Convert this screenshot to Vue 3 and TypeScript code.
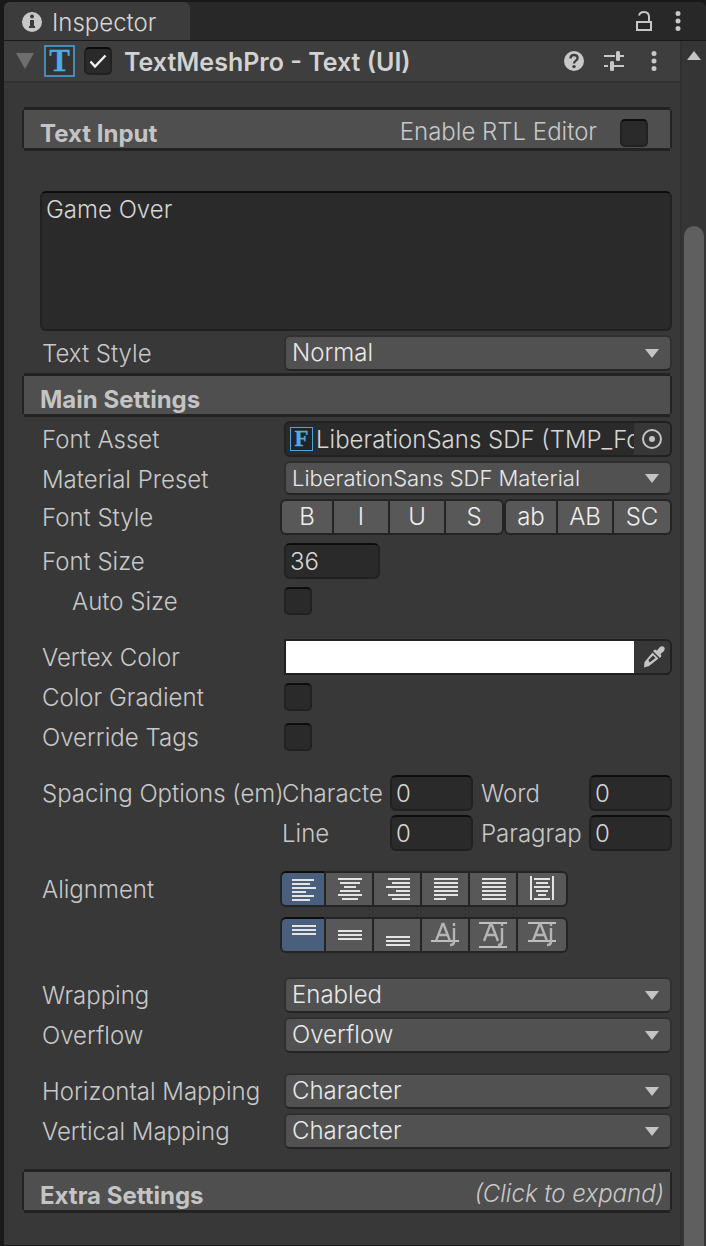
<script setup lang="ts">
import { ref } from 'vue'

type Bar = [number, number, number]

const enabled = ref(true)
const rtl = ref(false)
const text = ref('Game Over')
const fontSize = ref('36')
const autoSize = ref(false)
const colorGradient = ref(false)
const overrideTags = ref(false)

const emphasis = ['B', 'I', 'U', 'S']
const casing = ['ab', 'AB', 'SC']

const spacing = ref([
  [
    { id: 'sp-char', label: 'Character', value: '0' },
    { id: 'sp-word', label: 'Word', value: '0' },
  ],
  [
    { id: 'sp-line', label: 'Line', value: '0' },
    { id: 'sp-para', label: 'Paragraph', value: '0' },
  ],
])

/* Each bar is x, y, width inside a 28 x 28 icon */
const horizontal: { name: string; bars: Bar[]; rails?: boolean }[] = [
  { name: 'Left', bars: [[3, 4, 22], [3, 8, 18], [3, 12, 24], [3, 16, 14], [3, 20, 22], [3, 24, 18]] },
  { name: 'Center', bars: [[3, 3, 24], [5, 7, 20], [9, 11, 12], [5, 15, 20], [3, 19, 24], [7, 23, 16]] },
  { name: 'Right', bars: [[5, 3, 22], [9, 7, 18], [3, 11, 24], [13, 15, 14], [5, 19, 22], [9, 23, 18]] },
  { name: 'Justified', bars: [[3, 3, 24], [3, 7, 24], [3, 11, 24], [3, 15, 24], [3, 19, 24], [3, 23, 12]] },
  { name: 'Flush', bars: [[3, 3, 24], [3, 7, 24], [3, 11, 24], [3, 15, 24], [3, 19, 24], [3, 23, 24]] },
  { name: 'Geometry center', rails: true, bars: [[6, 3, 16], [8, 7, 12], [6, 11, 16], [8, 15, 12], [10, 19, 8], [6, 23, 16]] },
]
const vertical: { name: string; bars: Bar[]; glyph?: boolean }[] = [
  { name: 'Top', bars: [[3, 4, 24], [3, 8, 24], [3, 12, 24]] },
  { name: 'Middle', bars: [[3, 9, 24], [3, 13, 24], [3, 17, 24]] },
  { name: 'Bottom', bars: [[3, 15, 24], [3, 19, 24], [3, 23, 24]] },
  { name: 'Baseline', glyph: true, bars: [[0, 19, 28]] },
  { name: 'Midline', glyph: true, bars: [[0, 1, 28], [0, 25, 28]] },
  { name: 'Capline', glyph: true, bars: [[0, 1, 28], [0, 19, 28]] },
]
const hAlign = ref(0)
const vAlign = ref(0)
</script>

<template>
  <div class="window">
    <header class="tabs">
      <button class="tab" type="button">
        <svg width="20" height="20" viewBox="0 0 20 20" aria-hidden="true">
          <circle cx="10" cy="10" r="10" fill="#c8c8c8" />
          <path d="M8 8h4v6h1v2H7v-2h1z" fill="#3c3c3c" />
          <circle cx="10" cy="4.5" r="2" fill="#3c3c3c" />
        </svg>
        <span>Inspector</span>
      </button>
      <div class="tab-tools">
        <button class="icon" type="button" aria-label="Lock">
          <svg width="16" height="20" viewBox="0 0 16 20" fill="none" stroke="#c8c8c8" stroke-width="2" aria-hidden="true">
            <path d="M1 11h14v8H1zM3 4.500C3.600 2.200 5.500 1 8 1c3 0 5 1.800 5 5v5" />
          </svg>
        </button>
        <button class="icon" type="button" aria-label="Window menu">
          <svg width="6" height="20" viewBox="0 0 6 20" fill="#c8c8c8" aria-hidden="true">
            <circle cx="3" cy="2.5" r="2.5" /><circle cx="3" cy="10" r="2.5" /><circle cx="3" cy="17.5" r="2.5" />
          </svg>
        </button>
      </div>
    </header>

    <div class="body">
      <main class="panel">
        <div class="component">
          <button class="icon" type="button" aria-label="Collapse component">
            <svg width="18" height="16" viewBox="0 0 18 16" aria-hidden="true"><path d="M0 0h18L9 16z" fill="#6e6e6e" /></svg>
          </button>
          <svg class="logo" width="31" height="32" viewBox="0 0 31 32" aria-hidden="true">
            <rect x="1" y="1" width="29" height="30" fill="#333333" stroke="#4ba6df" stroke-width="1.5" />
            <text class="serif" x="15.5" y="26" font-size="31" text-anchor="middle" fill="#4eabe8" stroke="#4eabe8" stroke-width="0.3">T</text>
          </svg>
          <input id="enabled" v-model="enabled" class="check" type="checkbox" />
          <label class="title" for="enabled">TextMeshPro - Text (UI)</label>
          <button class="icon" type="button" aria-label="Help">
            <svg width="20" height="20" viewBox="0 0 20 20" aria-hidden="true">
              <circle cx="10" cy="10" r="10" fill="#c8c8c8" />
              <path d="M6.500 7.500C6.500 5 8 4 10 4s3.600 1.200 3.600 3.200C13.600 9.800 10 9.600 10 12.600" fill="none" stroke="#3e3e3e" stroke-width="2.3" />
              <circle cx="10" cy="15.6" r="1.7" fill="#3e3e3e" />
            </svg>
          </button>
          <button class="icon" type="button" aria-label="Presets">
            <svg width="20" height="20" viewBox="0 0 20 20" fill="#c8c8c8" aria-hidden="true">
              <path d="M0 4h11v2H0zM16 4h4v2h-4zM0 14h4v2H0zM9 14h11v2H9z" />
              <rect x="12" y="0" width="4" height="10" rx="1.5" /><rect x="6" y="10" width="4" height="10" rx="1.5" />
            </svg>
          </button>
          <button class="icon" type="button" aria-label="Component menu">
            <svg width="6" height="20" viewBox="0 0 6 20" fill="#c8c8c8" aria-hidden="true">
              <circle cx="3" cy="2.5" r="2.5" /><circle cx="3" cy="10" r="2.5" /><circle cx="3" cy="17.5" r="2.5" />
            </svg>
          </button>
        </div>

        <div class="content">
          <section class="bar">
            <h2>Text Input</h2>
            <label class="rtl" for="rtl">Enable RTL Editor</label>
            <input id="rtl" v-model="rtl" class="check" type="checkbox" />
          </section>

          <textarea v-model="text" class="field area" aria-label="Text"></textarea>

          <div class="row">
            <label class="label" for="style">Text Style</label>
            <div class="select">
              <select id="style"><option>Normal</option></select>
              <svg width="14" height="9" viewBox="0 0 14 9" aria-hidden="true"><path d="M0 0h14L7 9z" fill="#c4c4c4" /></svg>
            </div>
          </div>

          <section class="bar main"><h2>Main Settings</h2></section>

          <div class="row">
            <label class="label" for="asset">Font Asset</label>
            <div class="object">
              <svg class="logo" width="23" height="24" viewBox="0 0 23 24" aria-hidden="true">
                <rect x="0.5" y="0.5" width="22" height="23" fill="#232323" stroke="#4ba6df" />
                <text class="serif" x="11.5" y="19" font-size="23" text-anchor="middle" fill="#4eabe8" stroke="#4eabe8" stroke-width="0.3">F</text>
              </svg>
              <button id="asset" class="asset" type="button">LiberationSans SDF (TMP_Font Asset)</button>
              <button class="icon pick" type="button" aria-label="Select font asset">
                <svg width="20" height="20" viewBox="0 0 20 20" aria-hidden="true">
                  <circle cx="10" cy="10" r="9" fill="none" stroke="#c4c4c4" stroke-width="2" />
                  <circle cx="10" cy="10" r="3" fill="#c4c4c4" />
                </svg>
              </button>
            </div>
          </div>

          <div class="row gap4">
            <label class="label" for="preset">Material Preset</label>
            <div class="select small">
              <select id="preset"><option>LiberationSans SDF Material</option></select>
              <svg width="14" height="9" viewBox="0 0 14 9" aria-hidden="true"><path d="M0 0h14L7 9z" fill="#c4c4c4" /></svg>
            </div>
          </div>

          <div class="row gap2">
            <span class="label">Font Style</span>
            <div class="styles">
              <div class="group four"><button v-for="s in emphasis" :key="s" type="button">{{ s }}</button></div>
              <div class="group three"><button v-for="s in casing" :key="s" type="button">{{ s }}</button></div>
            </div>
          </div>

          <div class="row gap8">
            <label class="label" for="size">Font Size</label>
            <input id="size" v-model="fontSize" class="field size" type="text" />
          </div>
          <div class="row gap4">
            <label class="label indent" for="auto">Auto Size</label>
            <input id="auto" v-model="autoSize" class="check" type="checkbox" />
          </div>

          <div class="row gap20">
            <label class="label" for="color">Vertex Color</label>
            <div class="color">
              <button id="color" class="swatch" type="button"></button>
              <button class="icon dropper" type="button" aria-label="Pick color">
                <svg width="22" height="22" viewBox="0 0 22 22" aria-hidden="true">
                  <path d="M10 5l2-1.500 2 1L16.500 1.500C18 0 20 0 21 1s1 3-.5 4.500L17.500 8l1 2-1.500 2z" fill="#c4c4c4" />
                  <path d="M9.500 6.500l6 6L6 20l-5 1.500L1.500 16zM10 9.500L5.500 14l1 2.500 6-4.500z" fill="#c4c4c4" fill-rule="evenodd" />
                </svg>
              </button>
            </div>
          </div>
          <div class="row gap4">
            <label class="label" for="gradient">Color Gradient</label>
            <input id="gradient" v-model="colorGradient" class="check" type="checkbox" />
          </div>
          <div class="row gap4">
            <label class="label" for="override">Override Tags</label>
            <input id="override" v-model="overrideTags" class="check" type="checkbox" />
          </div>

          <div v-for="(line, i) in spacing" :key="i" class="row" :class="i ? 'gap4' : 'gap20'">
            <span class="label">{{ i ? '' : 'Spacing Options (em)' }}</span>
            <div class="spacing">
              <template v-for="item in line" :key="item.id">
                <label class="label" :for="item.id">{{ item.label }}</label>
                <input :id="item.id" v-model="item.value" class="field" type="text" />
              </template>
            </div>
          </div>

          <div class="row gap20">
            <span class="label">Alignment</span>
            <div class="group six">
              <button v-for="(a, i) in horizontal" :key="a.name" type="button" :aria-label="a.name" :class="{ on: hAlign === i }" @click="hAlign = i">
                <svg width="28" height="28" viewBox="0 0 28 28" fill="#e4e4e4" aria-hidden="true">
                  <rect v-for="(b, k) in a.bars" :key="k" :x="b[0]" :y="b[1]" :width="b[2]" height="2" />
                  <path v-if="a.rails" d="M2 1h2v24H2zM24 1h2v24h-2z" />
                </svg>
              </button>
            </div>
          </div>
          <div class="row gap10">
            <span class="label"></span>
            <div class="group six">
              <button v-for="(a, i) in vertical" :key="a.name" type="button" :aria-label="a.name" :class="{ on: vAlign === i }" @click="vAlign = i">
                <svg width="28" height="28" viewBox="0 0 28 28" :fill="a.glyph ? '#c0c0c0' : '#e4e4e4'" aria-hidden="true">
                  <rect v-for="(b, k) in a.bars" :key="k" :x="b[0]" :y="b[1]" :width="b[2]" height="2" />
                  <g v-if="a.glyph" fill="none" stroke="#b4b4b4" stroke-width="2.4">
                    <path d="M5 20L11.500 3h1L19 20M8 14h8" />
                    <path d="M23 7v14q0 3-4 3M23 2v3" />
                  </g>
                </svg>
              </button>
            </div>
          </div>

          <div class="row gap24">
            <label class="label" for="wrap">Wrapping</label>
            <div class="select">
              <select id="wrap"><option>Enabled</option></select>
              <svg width="14" height="9" viewBox="0 0 14 9" aria-hidden="true"><path d="M0 0h14L7 9z" fill="#c4c4c4" /></svg>
            </div>
          </div>
          <div class="row gap4">
            <label class="label" for="overflow">Overflow</label>
            <div class="select">
              <select id="overflow"><option>Overflow</option></select>
              <svg width="14" height="9" viewBox="0 0 14 9" aria-hidden="true"><path d="M0 0h14L7 9z" fill="#c4c4c4" /></svg>
            </div>
          </div>
          <div class="row gap20">
            <label class="label" for="hmap">Horizontal Mapping</label>
            <div class="select">
              <select id="hmap"><option>Character</option></select>
              <svg width="14" height="9" viewBox="0 0 14 9" aria-hidden="true"><path d="M0 0h14L7 9z" fill="#c4c4c4" /></svg>
            </div>
          </div>
          <div class="row gap4">
            <label class="label" for="vmap">Vertical Mapping</label>
            <div class="select">
              <select id="vmap"><option>Character</option></select>
              <svg width="14" height="9" viewBox="0 0 14 9" aria-hidden="true"><path d="M0 0h14L7 9z" fill="#c4c4c4" /></svg>
            </div>
          </div>

          <button class="bar extra" type="button">
            <span class="heading">Extra Settings</span>
            <i>(Click to expand)</i>
          </button>
        </div>
      </main>

      <div class="scroll">
        <button class="icon" type="button" aria-label="Scroll up">
          <svg width="14" height="9" viewBox="0 0 14 9" aria-hidden="true"><path d="M0 9h14L7 0z" fill="#c4c4c4" /></svg>
        </button>
        <div class="thumb"></div>
      </div>
    </div>
  </div>
</template>

<style>
body {
  background: #191919;
}
</style>

<style scoped>
.window,
.window * {
  box-sizing: border-box;
}
.window {
  display: flex;
  flex-direction: column;
  min-height: 100vh;
  padding: 2px 0 0 4px;
  background: #191919;
  color: #c8c8c8;
  font: 300 24px/30px Inter, "Liberation Sans", sans-serif;
}
button,
input,
select,
textarea {
  margin: 0;
  padding: 0;
  border: 0;
  font: inherit;
  color: inherit;
  background: none;
  outline: none;
}
svg {
  display: block;
  flex: none;
  overflow: visible;
}
.serif {
  font-family: "Liberation Serif", serif;
  font-weight: 700;
}
.icon {
  display: grid;
  place-items: center;
  flex: none;
}
.tabs {
  display: flex;
  justify-content: space-between;
  height: 39px;
  background: #282828;
  border-bottom: 1px solid #191919;
  border-radius: 6px 6px 0 0;
}
.tab {
  display: flex;
  align-items: center;
  gap: 10px;
  width: 186px;
  padding: 2px 0 0 18px;
  background: #3c3c3c;
  border-radius: 6px 6px 0 0;
  color: #d6d6d6;
}
.tab span {
  padding-top: 2px;
}
.tab-tools {
  display: flex;
  align-items: center;
  gap: 23px;
  padding-right: 25px;
}
.body {
  display: flex;
  flex: 1;
}
.panel {
  flex: 1;
  min-width: 0;
  background: #383838;
  border-bottom: 1px solid #191919;
}
.component {
  display: flex;
  align-items: center;
  height: 42px;
  padding: 0 23px 0 12px;
  background: #3e3e3e;
  border-bottom: 2px solid #303030;
}
.component .logo {
  margin: 0 9px 0 10px;
}
.component .icon + .icon {
  margin-left: 20px;
}
.component .icon:last-child {
  margin-left: 27px;
}
.title {
  flex: 1;
  padding: 2px 0 0 12px;
  font-size: 25px;
  font-weight: 600;
  color: #d2d2d2;
  white-space: nowrap;
}
.content {
  display: flex;
  flex-direction: column;
  padding: 27px 8px 32px 18px;
}
.bar {
  display: flex;
  align-items: center;
  height: 38px;
  margin: 0 2px;
  padding: 10px 22px 0 16px;
  background: #4f4f4f;
  box-shadow: 0 -3px #232323, 0 3px #232323, -2px 0 #232323, 2px 0 #232323;
}
.bar h2,
.heading {
  flex: 1;
  margin: 0;
  font: inherit;
  font-weight: 700;
  text-align: left;
  color: #c4c4c4;
}
.rtl {
  margin-right: 23px;
  padding-bottom: 4px;
}
.main {
  margin: 5px 2px 7px;
}
.extra {
  margin-top: 23px;
  padding-right: 6px;
}
.extra i {
  padding-bottom: 4px;
}
.field {
  min-width: 0;
  height: 36px;
  padding: 0 4px;
  background: #2a2a2a;
  border: 2px solid #212121;
  border-top-color: #0d0d0d;
  border-radius: 6px;
  color: #d6d6d6;
}
.area {
  height: 140px;
  margin: 43px 0 4px 18px;
  padding-top: 2px;
  resize: none;
}
.check {
  appearance: none;
  flex: none;
  width: 28px;
  height: 28px;
  background: #2a2a2a;
  border: 2px solid #212121;
  border-top-color: #0d0d0d;
  border-radius: 5px;
}
.bar .check {
  margin-bottom: 2px;
}
.check:checked {
  background: #2a2a2a url("data:image/svg+xml,%3Csvg xmlns='http://www.w3.org/2000/svg' viewBox='0 0 24 24'%3E%3Cpath d='M4.500 12.500l4.500 5 10.500-11' fill='none' stroke='%23f0f0f0' stroke-width='2.400'/%3E%3C/svg%3E");
}
.row {
  display: grid;
  grid-template-columns: 242px minmax(0, 1fr);
  align-items: center;
  height: 36px;
  padding-left: 20px;
  white-space: nowrap;
}
.label {
  padding-top: 2px;
}
.gap2 { margin-top: 2px; }
.gap4 { margin-top: 4px; }
.gap8 { margin-top: 8px; }
.gap10 { margin-top: 10px; }
.gap20 { margin-top: 20px; }
.gap24 { margin-top: 24px; }
.indent {
  padding-left: 30px;
}
.select {
  display: grid;
  align-items: center;
}
.select select,
.select svg {
  grid-area: 1 / 1;
}
.select select {
  appearance: none;
  width: 100%;
  height: 36px;
  padding: 0 40px 0 6px;
  background: #515151;
  border: 2px solid #303030;
  border-bottom-color: #242424;
  border-radius: 6px;
  color: #e8e8e8;
}
.select svg {
  justify-self: end;
  margin-right: 13px;
  pointer-events: none;
}
.small {
  align-self: start;
}
.small select {
  height: 34px;
  padding-bottom: 2px;
  font-size: 22px;
}
.object,
.color {
  display: flex;
  align-items: stretch;
  height: 36px;
  overflow: hidden;
  background: #2a2a2a;
  border: 2px solid #212121;
  border-radius: 6px;
}
.object .logo {
  align-self: center;
  margin: 0 3px 0 4px;
}
.asset {
  flex: 1;
  min-width: 0;
  padding-top: 2px;
  overflow: hidden;
  text-align: left;
  white-space: nowrap;
  color: #d6d6d6;
}
.pick,
.dropper {
  width: 36px;
  background: #373737;
}
.dropper {
  padding-left: 4px;
}
.color {
  border-radius: 0 6px 6px 0;
}
.swatch {
  flex: 1;
  background: #ffffff;
}
.styles {
  display: grid;
  grid-template-columns: 224fr 168fr;
  margin-left: -4px;
}
.group {
  display: grid;
  gap: 2px;
  height: 36px;
  padding: 2px;
  overflow: hidden;
  background: #242424;
  border-radius: 6px;
}
.four { grid-template-columns: 50fr 54fr 54fr 56fr; }
.three { grid-template-columns: 50fr 54fr 56fr; }
.six {
  grid-template-columns: 42px repeat(4, 46px) 48px;
  justify-self: start;
  margin-left: -4px;
}
.group button {
  display: grid;
  place-items: center;
  min-width: 0;
  background: #585858;
  color: #eeeeee;
}
.group button:first-child {
  border-radius: 4px 0 0 4px;
}
.group button:last-child {
  border-radius: 0 4px 4px 0;
}
.group .on {
  background: #4a5f7c;
  box-shadow: 0 -2px #0d0d0d;
}
.size {
  width: 96px;
}
.spacing {
  display: grid;
  grid-template-columns: 104px minmax(0, 1fr) 112px minmax(0, 1fr);
  align-items: center;
  margin-left: -2px;
}
.spacing label {
  margin-right: 2px;
  overflow: hidden;
}
.spacing .field {
  margin-left: 4px;
}
.spacing .field + label {
  margin-left: 8px;
}
.scroll {
  display: flex;
  flex-direction: column;
  width: 26px;
  padding-right: 2px;
  background: #353535;
  border-left: 2px solid #303030;
}
.scroll .icon {
  height: 29px;
  padding-left: 2px;
}
.thumb {
  flex: 1;
  margin: 156px 0 0 2px;
  background: #5f5f5f;
  border-radius: 10px 10px 0 0;
}
</style>
